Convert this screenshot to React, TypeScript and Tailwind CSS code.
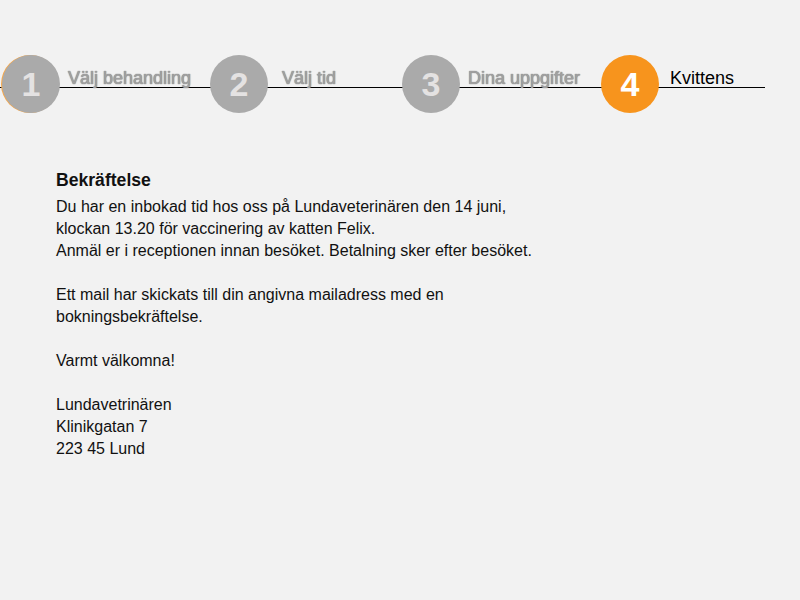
const steps = [
  { n: 1, label: 'Välj behandling', width: 'w-[208px]', gap: 'ml-[8px]' },
  { n: 2, label: 'Välj tid', width: 'w-[192px]', gap: 'ml-[14px]' },
  { n: 3, label: 'Dina uppgifter', width: 'w-[199px]', gap: 'ml-[8px]' },
  { n: 4, label: 'Kvittens', width: 'w-[164px]', gap: 'ml-[11px]', active: true },
];

function Step({ n, label, width, gap, active }: { n: number; label: string; width: string; gap: string; active?: boolean }) {
  return (
    <div className={`flex items-start ${width}`}>
      <div
        className={`w-[58px] h-[58px] shrink-0 rounded-full flex items-center justify-center text-[34px] font-bold leading-none ${
          active ? 'bg-[#f7941d] text-white' : 'bg-[#aaaaaa] text-[#e4e2e2]'
        } ${n === 1 ? 'shadow-[-1px_0_0_#f7a84a]' : ''}`}
      >
        {n}
      </div>
      <span
        className={`${gap} mt-[12px] text-[18px] leading-[22px] whitespace-nowrap ${
          active ? 'text-black' : 'text-[#a0a0a0] [text-shadow:0_0_1px_#8a8a8a,0_0_1px_#8a8a8a]'
        }`}
      >
        {label}
      </span>
    </div>
  );
}

export default function App() {
  return (
    <div className="min-h-[600px] bg-[#f2f2f2] font-['Liberation_Sans',Arial,sans-serif] text-[#111]">
      {/* stegindikator */}
      <div className="relative pt-[55px] pl-[2px]">
        <div className="absolute left-0 top-[87px] w-[765px] h-px bg-black" />
        <div className="relative flex">
          {steps.map((s) => (
            <Step key={s.n} {...s} />
          ))}
        </div>
      </div>

      {/* kvitto */}
      <div className="pl-[56px] pt-[56px] text-[16px] leading-[22px]">
        <h2 className="font-bold text-[17.6px] mb-[5px]">Bekräftelse</h2>
        <p>
          Du har en inbokad tid hos oss på Lundaveterinären den 14 juni,
          <br />
          klockan 13.20 för vaccinering av katten Felix.
          <br />
          Anmäl er i receptionen innan besöket. Betalning sker efter besöket.
        </p>
        <p className="mt-[22px]">
          Ett mail har skickats till din angivna mailadress med en
          <br />
          bokningsbekräftelse.
        </p>
        <p className="mt-[22px]">Varmt välkomna!</p>
        <p className="mt-[22px]">
          Lundavetrinären
          <br />
          Klinikgatan 7
          <br />
          223 45 Lund
        </p>
      </div>
    </div>
  );
}
